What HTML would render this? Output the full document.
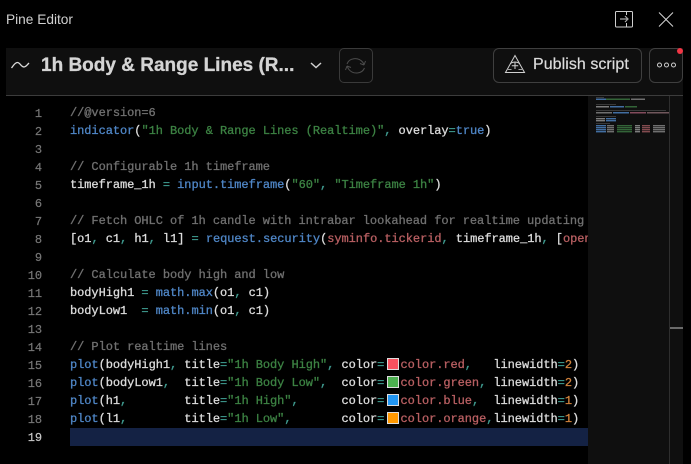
<!DOCTYPE html>
<html><head><meta charset="utf-8"><style>
html,body{margin:0;padding:0;background:#000;}
#r{position:relative;width:691px;height:464px;overflow:hidden;background:#000;font-family:"Liberation Sans",sans-serif;color:#d8d8d8;}
.a{position:absolute;white-space:nowrap;}
.l{position:absolute;left:70px;width:518px;height:18px;overflow:hidden;white-space:pre;font:12px/18px "Liberation Mono",monospace;letter-spacing:-.06px;color:#dcdcdc;-webkit-text-stroke:.3px currentColor;}
.n{position:absolute;left:14px;width:28px;text-align:right;font:12px/18px "Liberation Mono",monospace;letter-spacing:-.06px;color:#777;-webkit-text-stroke:.2px currentColor;}
.c{color:#707070}.f{color:#4f86c6}.s{color:#3c8243}.o{color:#3f9a8f}.k{color:#b85f62}.u{color:#d0823c}
i{display:inline-block;width:16.2px;height:11px;position:relative;vertical-align:-1px;}
i b{position:absolute;left:2.5px;top:0;width:10px;height:10px;border:.5px solid #ddd;}
</style></head><body><div id="r">
<div class="a" style="left:6px;top:12px;font-size:13.7px;line-height:16px;color:#d0d0d0">Pine Editor</div>
<svg class="a" style="left:613px;top:10px" width="22" height="19" fill="none" stroke="#cfcfcf" stroke-width="1"><rect x="2.500" y="1.500" width="17" height="15.500" rx="1"/><path d="M13.500 1.500V5M13.500 13V17"/><path d="M7 9H15M12 6L15 9L12 12" stroke="#a8a8a8" stroke-width="1.200"/></svg>
<svg class="a" style="left:657px;top:11px" width="17" height="17" fill="none" stroke="#d4d4d4" stroke-width="1"><path d="M2 1.500L16 15.500M16 1.500L2 15.500"/></svg>
<div class="a" style="left:6px;top:48px;width:677px;height:47px;background:#0f0f0f;border-bottom:1px solid #3c3c3c"></div>
<svg class="a" style="left:10px;top:58px" width="22" height="14" fill="none" stroke="#dcdcdc" stroke-width="1.300"><path d="M1.500 10C3 8 5 4.500 7.500 4.500C10 4.500 11 9 14 9C16 9 17.500 6.500 19 5"/></svg>
<div class="a" style="left:41px;top:52.500px;font-size:19px;font-weight:bold;line-height:26px;color:#d4d4d4;-webkit-text-stroke:.3px #d4d4d4">1h Body &amp; Range Lines (R...</div>
<svg class="a" style="left:309px;top:60px" width="14" height="11" fill="none" stroke="#d0d0d0" stroke-width="1.500"><path d="M2 3L7 7.500L12 3"/></svg>
<div class="a" style="left:339px;top:48px;width:32px;height:33px;border:1px solid #3a3a3a;border-radius:5px"></div>
<svg class="a" style="left:344px;top:55px" width="24" height="22" fill="none" stroke="#4c4c4c" stroke-width="1"><path d="M3 9C5 3 14 1.500 19 7.500L20 10M20 10L21.500 6M20 10L16 8.500M20.500 13C18 19 9 20 4.500 14L3 11M3 11L1.500 15M3 11L7 12.500"/></svg>
<div class="a" style="left:493px;top:48px;width:147px;height:33px;border:1px solid #3f3f3f;border-radius:6px"></div>
<svg class="a" style="left:504px;top:54px" width="23" height="21" fill="none" stroke="#d0d0d0" stroke-width="1"><path d="M11 1.500L1.500 18.500H20.500Z"/><path d="M11 8.500V15M7.800 11.750H14.200"/><path d="M6.300 9.500Q11 6.500 15.700 9.500" stroke-width=".9"/><path d="M4 15.500H7.500M14.500 15.500H18" stroke-width=".8"/></svg>
<div class="a" style="left:533px;top:55px;font-size:16px;line-height:20px;color:#dcdcdc;letter-spacing:.05px;-webkit-text-stroke:.2px #dcdcdc">Publish script</div>
<div class="a" style="left:649px;top:48px;width:32px;height:33px;border:1px solid #3f3f3f;border-radius:6px"></div>
<svg class="a" style="left:656px;top:60px" width="22" height="9" fill="none" stroke="#cfcfcf" stroke-width="1"><circle cx="3.500" cy="5" r="2"/><circle cx="10.500" cy="5" r="2"/><circle cx="17.500" cy="5" r="2"/></svg>
<div class="a" style="left:677px;top:48px;width:6px;height:6px;border-radius:50%;background:#f23645"></div>

<div class="a" style="left:588px;top:96px;width:95px;height:368px;background:#0f0f0f"></div>
<div class="a" style="left:669px;top:96px;width:1px;height:368px;background:#2e2e2e"></div>
<div class="a" style="left:670px;top:327px;width:13px;height:2px;background:#6a6a6a"></div>
<svg class="a" style="left:595px;top:96px;filter:blur(.35px);opacity:.8" width="76" height="40">
<rect x="1" y="1" width="8" height="1" fill="#444"/><rect x="1" y="2.500" width="10" height="1.500" fill="#4f86c6"/><rect x="11" y="2.500" width="24" height="1.500" fill="#3c7a43"/><rect x="36" y="2.500" width="14" height="1.500" fill="#888"/>
<rect x="1" y="8" width="20" height="1" fill="#444"/><rect x="1" y="10" width="13" height="1.500" fill="#999"/><rect x="15" y="10" width="14" height="1.500" fill="#4f86c6"/><rect x="30" y="10" width="12" height="1.500" fill="#3c7a43"/>
<rect x="1" y="14" width="70" height="1" fill="#444"/><rect x="1" y="16" width="16" height="1.500" fill="#888"/><rect x="18" y="16" width="16" height="1.500" fill="#4f86c6"/><rect x="35" y="16" width="16" height="1.500" fill="#a05a70"/><rect x="52" y="16" width="22" height="1.500" fill="#8a6a70"/>
<rect x="1" y="20" width="20" height="1" fill="#444"/><rect x="1" y="22" width="9" height="1.400" fill="#999"/><rect x="11" y="22" width="10" height="1.400" fill="#4f86c6"/><rect x="1" y="24" width="9" height="1.400" fill="#999"/><rect x="11" y="24" width="10" height="1.400" fill="#4f86c6"/>
<rect x="1" y="27" width="14" height="1" fill="#444"/>
<g><rect x="1" y="29" width="10" height="1.400" fill="#4f86c6"/><rect x="12" y="29" width="7" height="1.400" fill="#888"/><rect x="22" y="29" width="15" height="1.400" fill="#3c7a43"/><rect x="40" y="29" width="5" height="1.400" fill="#999"/><rect x="47" y="29" width="8" height="1.400" fill="#a05a60"/><rect x="58" y="29" width="12" height="1.400" fill="#888"/>
<rect x="1" y="31" width="10" height="1.400" fill="#4f86c6"/><rect x="12" y="31" width="7" height="1.400" fill="#888"/><rect x="22" y="31" width="15" height="1.400" fill="#3c7a43"/><rect x="40" y="31" width="5" height="1.400" fill="#999"/><rect x="47" y="31" width="8" height="1.400" fill="#a05a60"/><rect x="58" y="31" width="12" height="1.400" fill="#888"/>
<rect x="1" y="33" width="10" height="1.400" fill="#4f86c6"/><rect x="12" y="33" width="7" height="1.400" fill="#888"/><rect x="22" y="33" width="15" height="1.400" fill="#3c7a43"/><rect x="40" y="33" width="5" height="1.400" fill="#999"/><rect x="47" y="33" width="8" height="1.400" fill="#a05a60"/><rect x="58" y="33" width="12" height="1.400" fill="#888"/>
<rect x="1" y="35" width="10" height="1.400" fill="#4f86c6"/><rect x="12" y="35" width="7" height="1.400" fill="#888"/><rect x="22" y="35" width="15" height="1.400" fill="#3c7a43"/><rect x="40" y="35" width="5" height="1.400" fill="#999"/><rect x="47" y="35" width="8" height="1.400" fill="#a05a60"/><rect x="58" y="35" width="12" height="1.400" fill="#888"/></g>
</svg>

<div class="a" style="left:70px;top:428px;width:518px;height:18px;background:#142244"></div>

<div class="n" style="top:105px">1</div><div class="l c" style="top:104px">//@version=6</div>
<div class="n" style="top:123px">2</div><div class="l" style="top:122px"><span class="f">indicator</span>(<span class="s">"1h Body &amp; Range Lines (Realtime)"</span><span class="o">,</span> overlay<span class="o">=</span><span class="f">true</span>)</div>
<div class="n" style="top:141px">3</div>
<div class="n" style="top:159px">4</div><div class="l c" style="top:158px">// Configurable 1h timeframe</div>
<div class="n" style="top:177px">5</div><div class="l" style="top:176px">timeframe_1h <span class="o">=</span> <span class="f">input.timeframe</span>(<span class="s">"60"</span><span class="o">,</span> <span class="s">"Timeframe 1h"</span>)</div>
<div class="n" style="top:195px">6</div>
<div class="n" style="top:213px">7</div><div class="l c" style="top:212px">// Fetch OHLC of 1h candle with intrabar lookahead for realtime updating</div>
<div class="n" style="top:231px">8</div><div class="l" style="top:230px">[o1<span class="o">,</span> c1<span class="o">,</span> h1<span class="o">,</span> l1] <span class="o">=</span> <span class="f">request.security</span>(<span class="k">syminfo.tickerid</span><span class="o">,</span> timeframe_1h<span class="o">,</span> [<span class="k">open</span><span class="o">,</span> <span class="k">close</span>])</div>
<div class="n" style="top:249px">9</div>
<div class="n" style="top:267px">10</div><div class="l c" style="top:266px">// Calculate body high and low</div>
<div class="n" style="top:285px">11</div><div class="l" style="top:284px">bodyHigh1 <span class="o">=</span> <span class="f">math.max</span>(o1<span class="o">,</span> c1)</div>
<div class="n" style="top:303px">12</div><div class="l" style="top:302px">bodyLow1  <span class="o">=</span> <span class="f">math.min</span>(o1<span class="o">,</span> c1)</div>
<div class="n" style="top:321px">13</div>
<div class="n" style="top:339px">14</div><div class="l c" style="top:338px">// Plot realtime lines</div>
<div class="n" style="top:357px">15</div><div class="l" style="top:356px"><span class="f">plot</span>(bodyHigh1<span class="o">,</span> title<span class="o">=</span><span class="s">"1h Body High"</span><span class="o">,</span> color<span class="o">=</span><i><b style="background:#f7525f"></b></i><span class="k">color.red</span><span class="o">,</span>   linewidth<span class="o">=</span><span class="u">2</span>)</div>
<div class="n" style="top:375px">16</div><div class="l" style="top:374px"><span class="f">plot</span>(bodyLow1<span class="o">,</span>  title<span class="o">=</span><span class="s">"1h Body Low"</span><span class="o">,</span>  color<span class="o">=</span><i><b style="background:#4caf50"></b></i><span class="k">color.green</span><span class="o">,</span> linewidth<span class="o">=</span><span class="u">2</span>)</div>
<div class="n" style="top:393px">17</div><div class="l" style="top:392px"><span class="f">plot</span>(h1<span class="o">,</span>        title<span class="o">=</span><span class="s">"1h High"</span><span class="o">,</span>      color<span class="o">=</span><i><b style="background:#2196f3"></b></i><span class="k">color.blue</span><span class="o">,</span>  linewidth<span class="o">=</span><span class="u">1</span>)</div>
<div class="n" style="top:411px">18</div><div class="l" style="top:410px"><span class="f">plot</span>(l1<span class="o">,</span>        title<span class="o">=</span><span class="s">"1h Low"</span><span class="o">,</span>       color<span class="o">=</span><i><b style="background:#ff9800"></b></i><span class="k">color.orange</span><span class="o">,</span>linewidth<span class="o">=</span><span class="u">1</span>)</div>
<div class="n" style="top:429px;color:#c8c8c8">19</div>
</div></body></html>
